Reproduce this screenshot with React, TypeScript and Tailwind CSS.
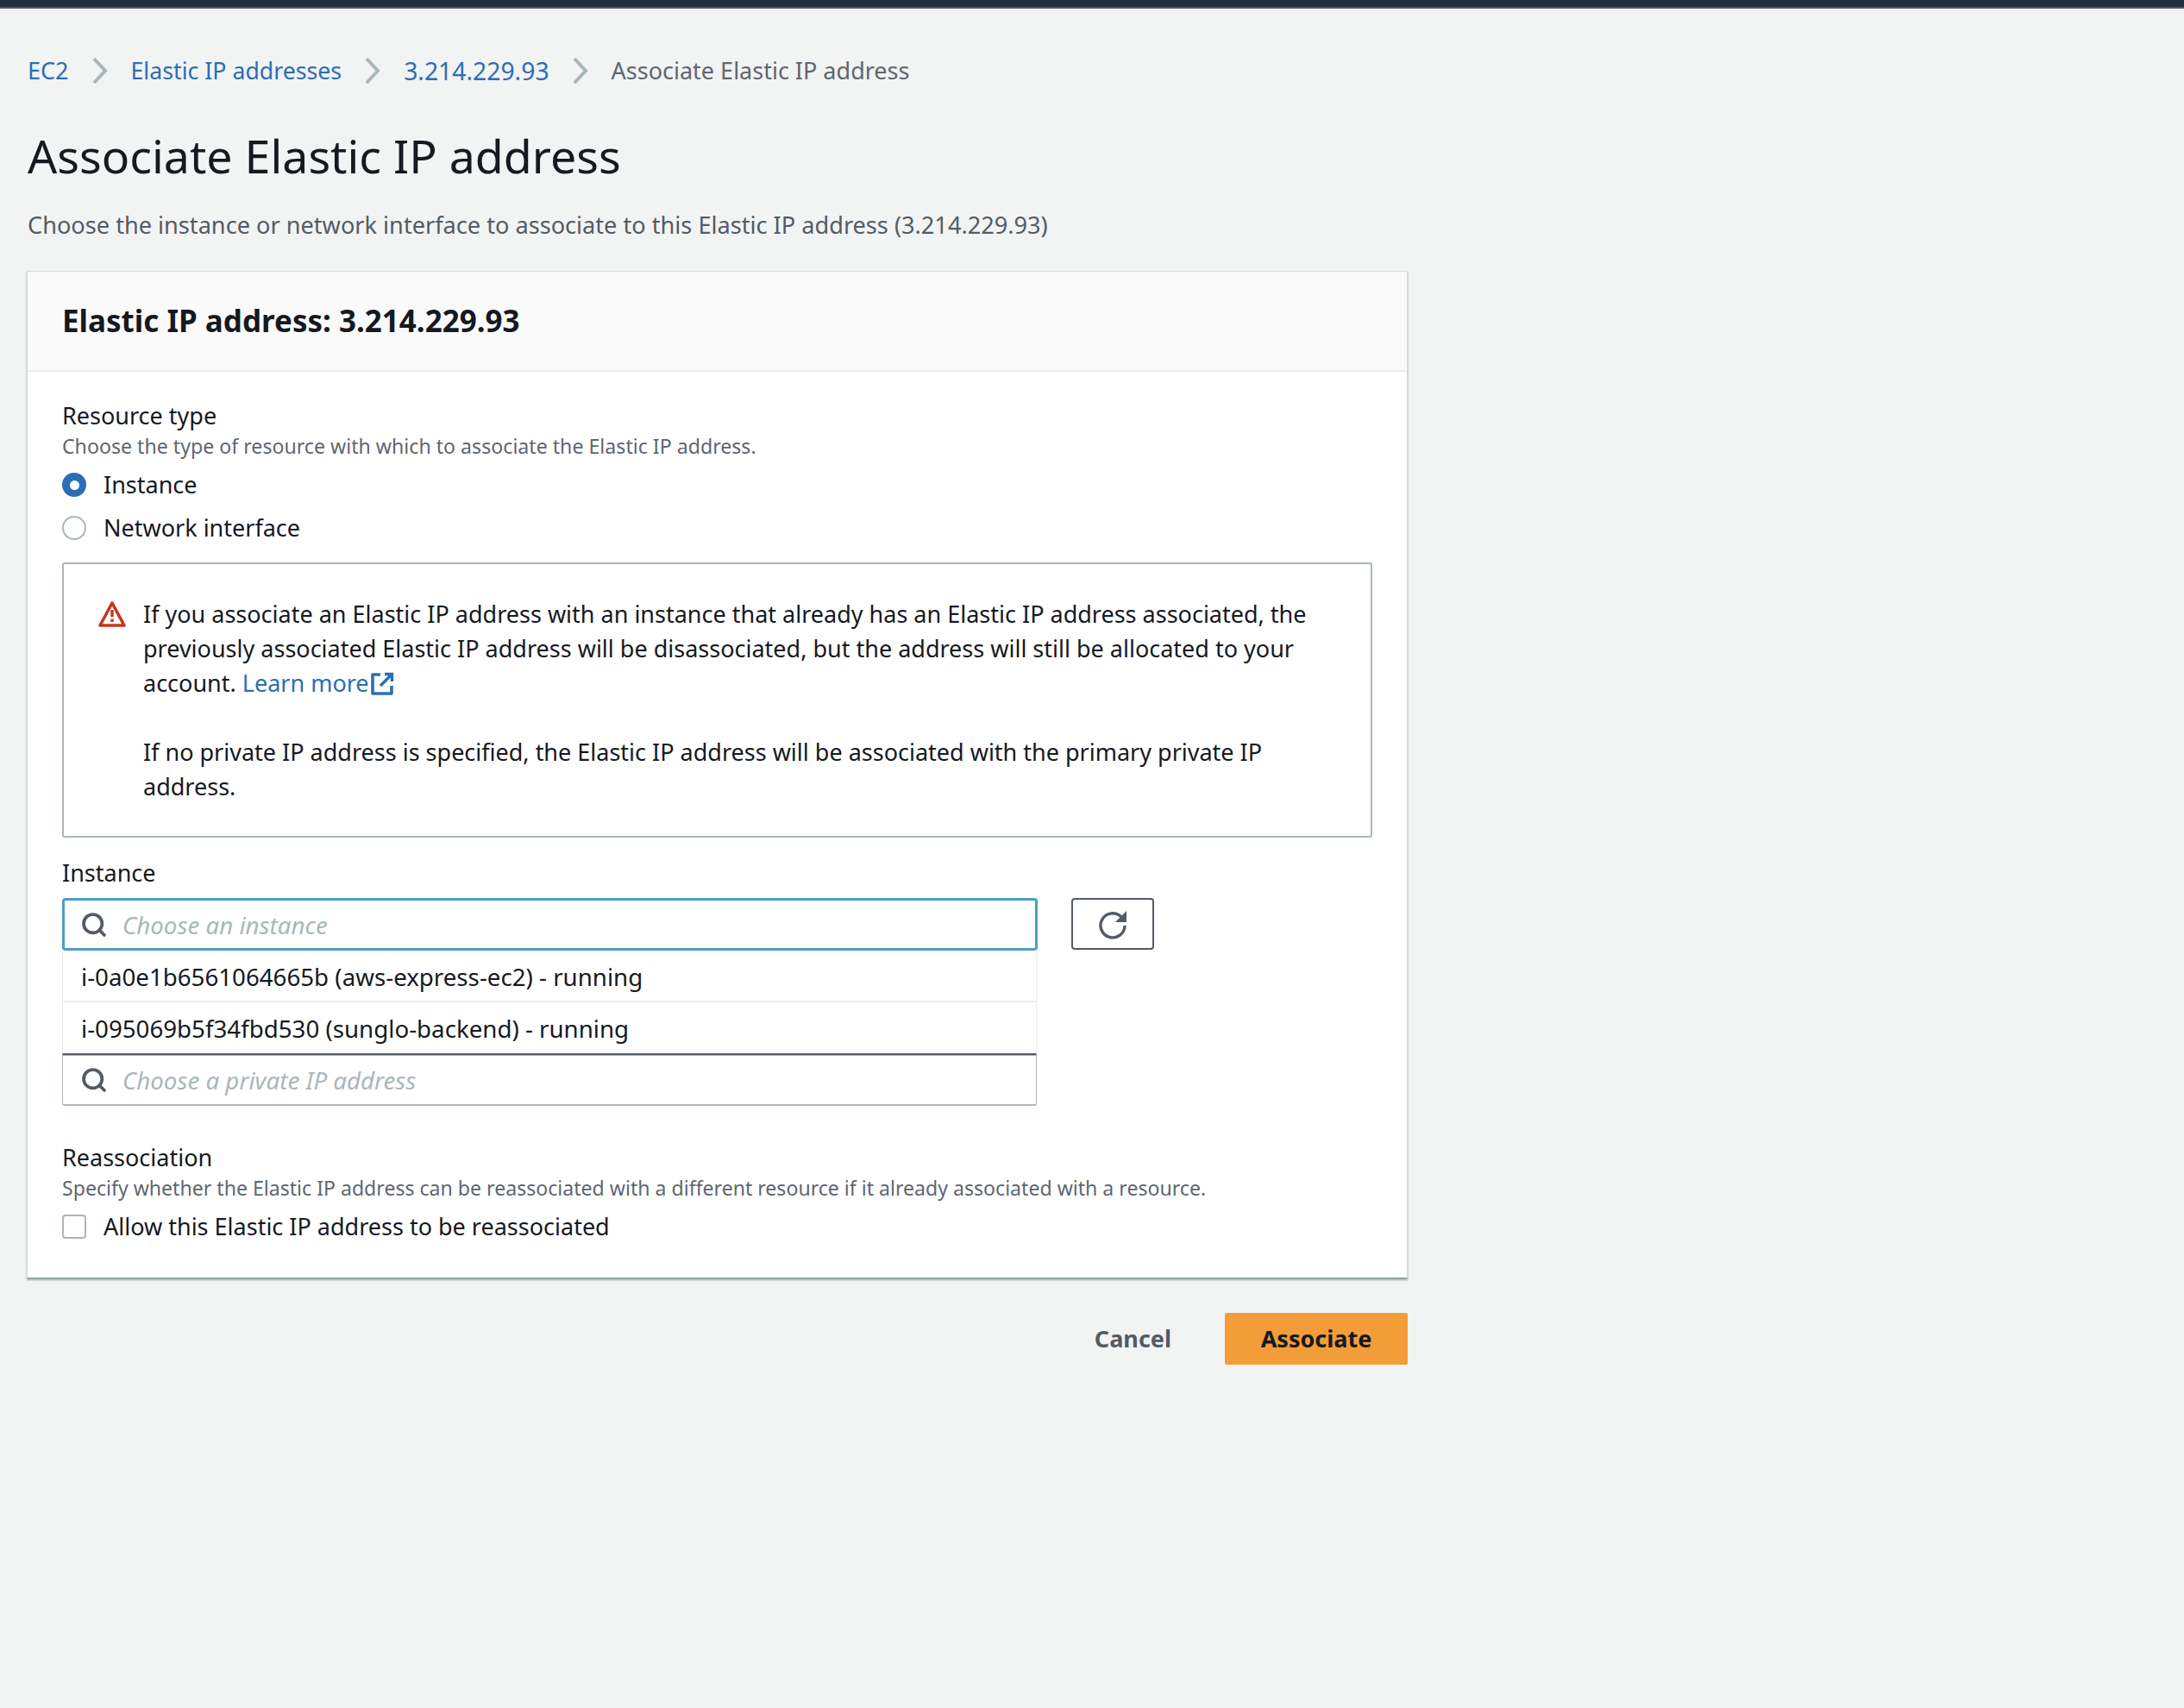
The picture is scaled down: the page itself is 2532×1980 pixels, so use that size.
import { Search } from 'lucide-react';

function Crumb({ label, last, className }: { label: string; last?: boolean; className?: string }) {
  return (
    <>
      <a href="#" className={className}>
        {label}
      </a>
      {!last && (
        <svg viewBox="0 0 18 30" className="w-[18px] h-[30px] ml-[27px] mr-[27px]" fill="none">
          <path d="M2 1 L15 15 L2 29" stroke="#aab7b8" strokeWidth="4" />
        </svg>
      )}
    </>
  );
}

function SearchField({ placeholder, focused }: { placeholder: string; focused?: boolean }) {
  return (
    <div
      className={
        focused
          ? 'flex items-center h-[61px] w-[1131px] bg-white rounded-[4px] border-[3px] border-[#4a9fc7] pl-[18px]'
          : 'flex items-center h-[59px] w-[1130px] bg-white rounded-b-[3px] border border-[#aab7b8] border-b-2 pl-[20px]'
      }
    >
      <Search className="w-[32px] h-[32px] text-[#545b64]" strokeWidth={2.8} />
      <span className="ml-[17px] italic text-[27.7px] text-[#aab7b8]">{placeholder}</span>
    </div>
  );
}

export default function App() {
  return (
    <div className="min-h-[1980px] bg-[#f2f3f3] font-['Noto_Sans','Open_Sans',sans-serif] text-[27px] leading-[40px] text-[#16191f]">
      <div className="h-[8px] bg-[#232f3e] border-b-2 border-[#545b64] box-content" />
      <div className="w-[1632px] pl-[32px]">
        <nav className="flex items-center h-[40px] mt-[52px]">
          <Crumb label="EC2" className="text-[#2c6eb5]" />
          <Crumb label="Elastic IP addresses" className="text-[26.7px] text-[#2c6eb5]" />
          <Crumb label="3.214.229.93" className="text-[28.3px] text-[#2c6eb5]" />
          <Crumb label="Associate Elastic IP address" className="text-[#5f6670]" last />
        </nav>
        <h1 className="mt-[44px] text-[53.7px] leading-[70px] font-normal">Associate Elastic IP address</h1>
        <p className="mt-[25px] text-[27.15px] text-[#545b64]">
          Choose the instance or network interface to associate to this Elastic IP address (3.214.229.93)
        </p>

        <div className="mt-[33px] -ml-px bg-white border border-[#d5dbdb] border-b-[#879596] shadow-[0_2px_2px_rgba(0,28,36,0.35)]">
          <div className="h-[116px] flex items-center px-[40px] bg-[#fafafa] border-b-2 border-[#eaeded]">
            <h2 className="text-[35px] font-bold">Elastic IP address: 3.214.229.93</h2>
          </div>
          <div className="px-[40px] pt-[31px] pb-[39px]">
            <div>Resource type</div>
            <div className="text-[23.15px] leading-[30px] text-[#5f6670]">
              Choose the type of resource with which to associate the Elastic IP address.
            </div>
            <div className="mt-[10px] flex flex-col gap-[10px]">
              <label className="flex items-center gap-[20px] h-[40px]">
                <span className="w-[28px] h-[28px] rounded-full bg-[#2c6eb5] flex items-center justify-center">
                  <span className="w-[11px] h-[11px] rounded-full bg-white" />
                </span>
                Instance
              </label>
              <label className="flex items-center gap-[20px] h-[40px]">
                <span className="w-[28px] h-[28px] rounded-full bg-white border-2 border-[#aab7b8]" />
                Network interface
              </label>
            </div>

            <div className="mt-[20px] h-[319px] border-2 border-[#aab7b8] rounded-[3px] flex pt-[38px] pl-[40px] pr-[60px]">
              <svg viewBox="0 0 32 32" className="w-[32px] h-[32px] mt-[3px] shrink-0" fill="none">
                <path d="M16 4 L30 30 H2 Z" stroke="#c2381f" strokeWidth="3.6" strokeLinejoin="round" />
                <path d="M16 12 V20 M16 22.5 V26" stroke="#c2381f" strokeWidth="3.4" />
              </svg>
              <div className="ml-[20px]">
                <p>
                  If you associate an Elastic IP address with an instance that already has an Elastic IP address associated, the
                  previously associated Elastic IP address will be disassociated, but the address will still be allocated to your
                  account.{' '}
                  <a href="#" className="text-[#2c6eb5]">
                    Learn more
                    <svg viewBox="0 0 28 28" className="inline-block align-[-5px] w-[28px] h-[28px] ml-[1px]" fill="none" stroke="currentColor">
                      <path d="M12 3 H3 V25 H25 V16" strokeWidth="3.6" strokeLinejoin="round" />
                      <path d="M12 16 L25 3 M17 2.5 H25.5 V11" strokeWidth="3.4" />
                    </svg>
                  </a>
                </p>
                <p className="mt-[40px]">
                  If no private IP address is specified, the Elastic IP address will be associated with the primary private IP
                  address.
                </p>
              </div>
            </div>

            <div className="mt-[21px]">Instance</div>
            <div className="mt-[9px] flex items-start">
              <div className="flex flex-col">
                <SearchField placeholder="Choose an instance" focused />
                <div className="w-[1130px] bg-white border-x border-[#eaeded] border-b-2 border-b-[#545b64] text-[27.7px]">
                  <div className="h-[60px] flex items-center pl-[21px] pt-[2px] border-b-2 border-[#eaeded]">
                    i-0a0e1b6561064665b (aws-express-ec2) - running
                  </div>
                  <div className="h-[59px] flex items-center pl-[21px]">i-095069b5f34fbd530 (sunglo-backend) - running</div>
                </div>
                <SearchField placeholder="Choose a private IP address" />
              </div>
              <button className="ml-[39px] w-[96px] h-[60px] flex items-center justify-center border-2 border-[#545b64] rounded-[4px] bg-white text-[#545b64]">
                <svg viewBox="0 0 36 36" className="w-[36px] h-[36px]" fill="none">
                  <path d="M28 10 A14 14 0 1 0 32 20" stroke="currentColor" strokeWidth="3.4" />
                  <path d="M34 3 V16 H21 Z" fill="currentColor" />
                </svg>
              </button>
            </div>

            <div className="mt-[40px]">Reassociation</div>
            <div className="text-[23.1px] leading-[30px] text-[#5f6670]">
              Specify whether the Elastic IP address can be reassociated with a different resource if it already associated with a resource.
            </div>
            <label className="mt-[10px] flex items-center gap-[20px] h-[40px]">
              <span className="w-[28px] h-[28px] rounded-[4px] bg-white border-2 border-[#aab7b8]" />
              Allow this Elastic IP address to be reassociated
            </label>
          </div>
        </div>

        <div className="mt-[40px] flex items-center justify-end">
          <button className="font-bold text-[#545b64] mr-[62px]">Cancel</button>
          <button className="w-[212px] h-[60px] bg-[#f29d38] rounded-[2px] font-bold text-[#16191f]">Associate</button>
        </div>
      </div>
    </div>
  );
}
